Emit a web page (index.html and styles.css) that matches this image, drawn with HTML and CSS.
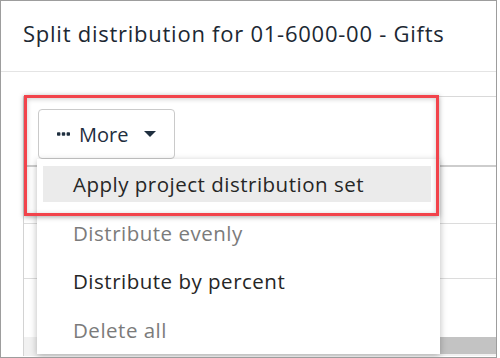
FILE: index.html
```html
<!DOCTYPE html>
<html lang="en">
  <head>
    <meta charset="UTF-8" />
    <meta name="viewport" content="width=device-width, initial-scale=1.0" />
    <title>Split distribution</title>

    <link rel="stylesheet" href="styles.css">
  </head>
  <body>
    <div class="dialog">
      <header class="dialog-head">
        <h1>Split distribution for 01-6000-00 - Gifts</h1>
      </header>

      <div class="dialog-body">
        <div class="grid">
          <div class="grid-toolbar">
            <div class="more">
              <button class="more-btn" type="button">
                <svg class="dots" width="13" height="4" viewBox="0 0 13 4">
                  <rect x="0" y="0.3" width="3.4" height="3.4" rx="0.8" fill="#1f2f3f" />
                  <rect x="4.8" y="0.3" width="3.4" height="3.4" rx="0.8" fill="#1f2f3f" />
                  <rect x="9.6" y="0.3" width="3.4" height="3.4" rx="0.8" fill="#1f2f3f" />
                </svg>
                <span>More</span>
                <svg class="caret" width="12" height="6" viewBox="0 0 12 6">
                  <path d="M0 0 H12 L6 6 Z" fill="#1f2f3f" />
                </svg>
              </button>

              <ul class="more-menu">
                <li class="active">Apply project distribution set</li>
                <li class="disabled">Distribute evenly</li>
                <li>Distribute by percent</li>
                <li class="disabled">Delete all</li>
              </ul>
            </div>
          </div>
          <div class="grid-row row-1"></div>
          <div class="grid-row row-2"></div>
          <div class="grid-row row-3"></div>
          <div class="grid-scroll">
            <span class="scroll-arrow">
              <svg width="5" height="8" viewBox="0 0 5 8"><path d="M5 0 V8 L0 4 Z" fill="#a0a0a0" /></svg>
            </span>
            <span class="scroll-thumb"></span>
          </div>
        </div>
      </div>

      <!-- annotation box drawn over the screenshot -->
      <div class="callout"></div>
    </div>
  </body>
</html>
```

FILE: styles.css
```css
* {
  padding: 0;
  margin: 0;
  box-sizing: border-box;
}

body {
  background-color: #ffffff;
  font-family: "Open Sans", Lato, sans-serif;
}

.dialog {
  position: relative;
  width: 497px;
  height: 358px;
  border: 1px solid #9d9d9d;
  background-color: #ffffff;
  overflow: hidden;
  display: flex;
  flex-direction: column;
}

.dialog-head {
  height: 71px;
  flex-shrink: 0;
  border-bottom: 1px solid #e4e4e4;
  padding: 19px 0 0 22px;
}

.dialog-head h1 {
  font-size: 22px;
  line-height: 26px;
  letter-spacing: 0.75px;
  font-weight: 400;
  color: #1c2833;
  white-space: nowrap;
}

.dialog-body {
  flex: 1;
  padding: 24px 0 0 22px;
}

.grid {
  width: 520px;
  border-top: 1px solid #d9d9d9;
  border-left: 1px solid #d3d3d3;
  display: flex;
  flex-direction: column;
}

.grid-toolbar {
  height: 70px;
  padding: 12px 0 0 14px;
  border-bottom: 2px solid #cdcdcd;
}

.more {
  position: relative;
  width: 137px;
}

.more-btn {
  width: 137px;
  height: 50px;
  border: 1px solid #cacaca;
  border-radius: 4px;
  background-color: #ffffff;
  display: flex;
  align-items: center;
  padding-left: 18px;
  font-family: "Open Sans", Lato, sans-serif;
  font-size: 20px;
  color: #1f2f3f;
}

.more-btn span {
  margin-left: 9px;
}

.more-btn .caret {
  margin-left: 16px;
}

.more-menu {
  position: absolute;
  top: 50px;
  left: -1px;
  width: 403px;
  list-style: none;
  background-color: #ffffff;
  padding: 7px 0 6px;
  box-shadow: 0 2px 7px rgba(0, 0, 0, 0.28);
  z-index: 2;
}

.more-menu li {
  height: 36px;
  line-height: 36px;
  margin: 0 9px 12.6px 6px;
  padding-left: 30px;
  font-size: 20.5px;
  letter-spacing: 0.5px;
  color: #262626;
  white-space: nowrap;
}

.more-menu li:last-child {
  margin-bottom: 0;
}

.more-menu li.active {
  background-color: #ebebeb;
}

.more-menu li.disabled {
  color: #7b7b7b;
}

.grid-row {
  border-bottom: 1px solid #dcdcdc;
}

.row-1 {
  height: 57px;
}

.row-2 {
  height: 55px;
}

.row-3 {
  height: 58px;
  border-bottom: none;
}

.grid-scroll {
  height: 19px;
  display: flex;
  background-color: #f1f1f1;
}

.scroll-arrow {
  width: 22px;
  display: flex;
  align-items: center;
  justify-content: flex-end;
  padding: 0 2px 4px 0;
}

.scroll-thumb {
  flex: 1;
  margin: 0 0 2px 3px;
  background-color: #c3c3c3;
}

.callout {
  position: absolute;
  left: 23px;
  top: 94px;
  width: 415px;
  height: 121px;
  border: 3px solid #f2434b;
  box-shadow: 0 1px 5px rgba(0, 0, 0, 0.35), inset 0 1px 5px rgba(0, 0, 0, 0.2);
  z-index: 3;
}
```
